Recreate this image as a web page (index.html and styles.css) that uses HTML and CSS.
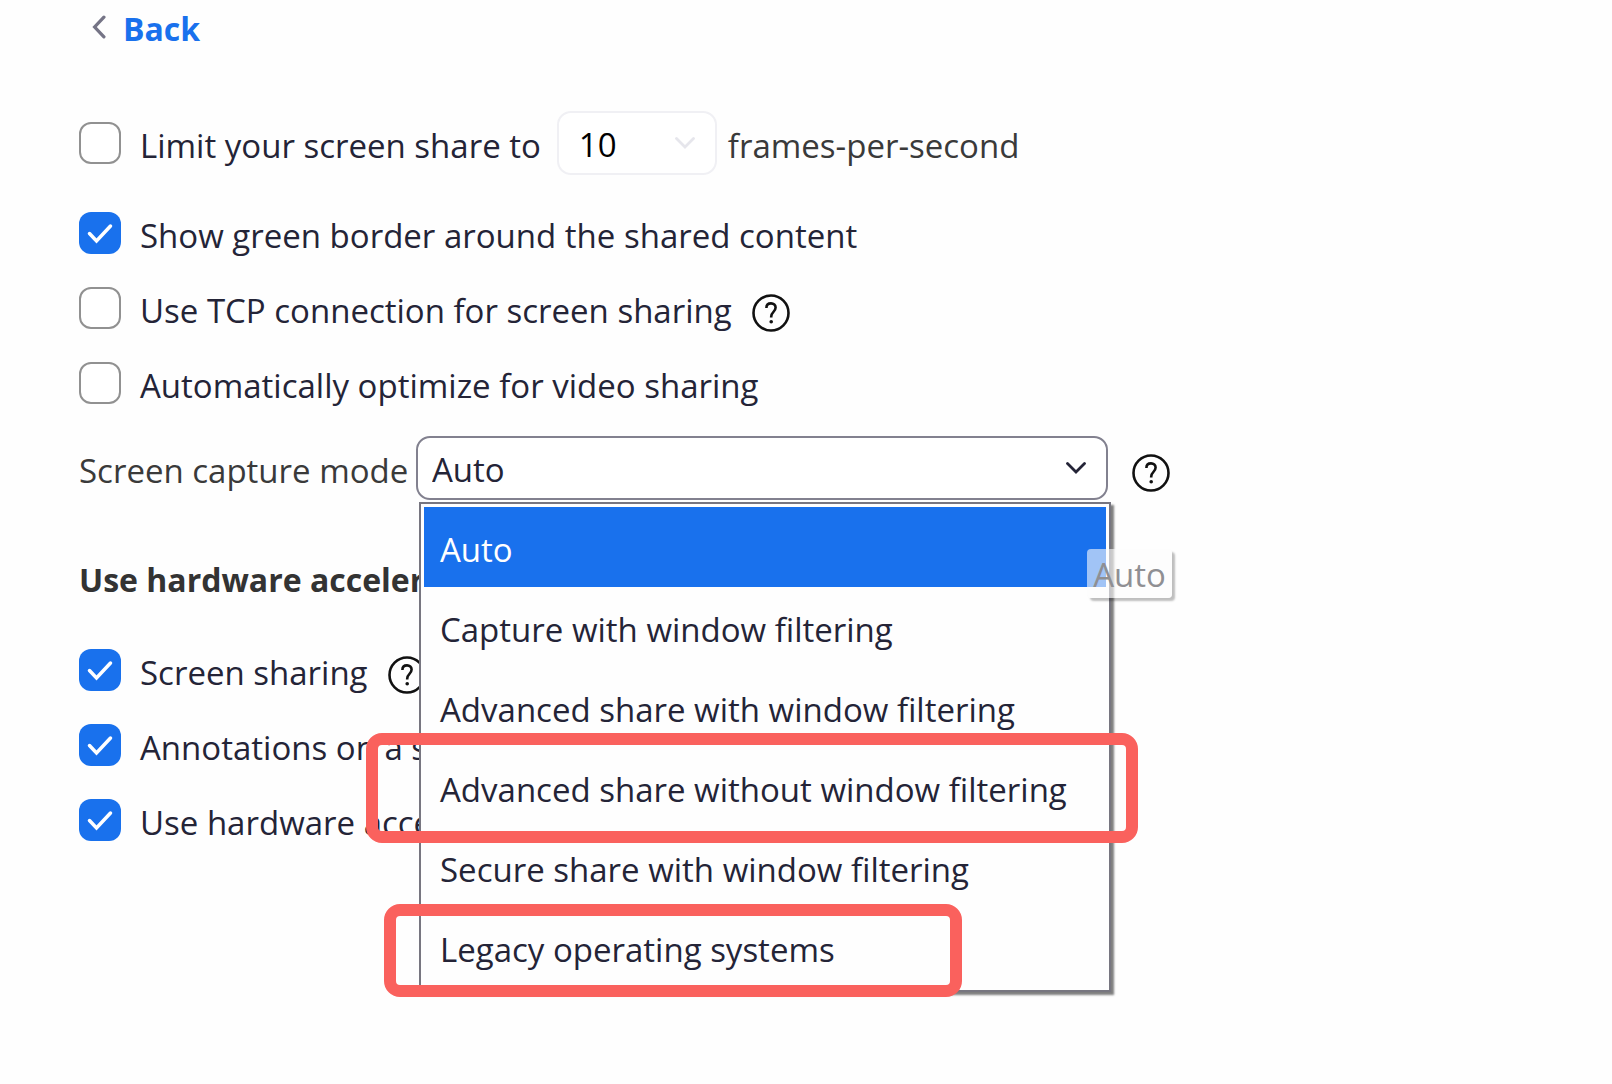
FILE: index.html
```html
<!DOCTYPE html>
<html lang="en">
<head>
    <meta charset="UTF-8">
    <meta name="viewport" content="width=device-width, initial-scale=1.0">
    <title>Screen Share Settings</title>
    <link rel="stylesheet" href="styles.css">
</head>
<body>
    <!-- shared icons -->
    <svg class="sprite" aria-hidden="true">
        <symbol id="icon-help" viewBox="0 0 38 38">
            <circle cx="19" cy="19" r="17.5" fill="none" stroke="currentColor" stroke-width="2.6"/>
            <path d="M14.4 14c0-2.900 1.900-4.600 4.600-4.600s4.600 1.700 4.600 4.200c0 2-.9 3.200-2.300 4.500-1.500 1.400-2.100 2.400-2.100 4.700v.8" fill="none" stroke="currentColor" stroke-width="2.600"/>
            <circle cx="19.200" cy="27.800" r="1.800" fill="currentColor"/>
        </symbol>
        <symbol id="icon-down" viewBox="0 0 20 12">
            <path d="M1.500 1.500L10 10l8.500-8.500" fill="none" stroke="currentColor" stroke-width="2.800" stroke-linecap="round"/>
        </symbol>
    </svg>

    <main class="settings">
        <a href="#" class="back">
            <svg class="back-icon" viewBox="0 0 14 22" aria-hidden="true">
                <path d="M11.500 2L3 11l8.500 9" fill="none" stroke="currentColor" stroke-width="3" stroke-linecap="round"/>
            </svg>
            Back
        </a>

        <div class="row row-limit">
            <input type="checkbox" id="limit">
            <label for="limit">Limit your screen share to</label>
            <div class="select select-fps">
                <select aria-label="Frames per second" disabled>
                    <option>10</option>
                </select>
                <svg class="arrow" aria-hidden="true"><use href="#icon-down"/></svg>
            </div>
            <span class="plain">frames-per-second</span>
        </div>

        <div class="group">
            <div class="row">
                <input type="checkbox" id="border" checked>
                <label for="border">Show green border around the shared content</label>
            </div>
            <div class="row">
                <input type="checkbox" id="tcp">
                <label for="tcp">Use TCP connection for screen sharing</label>
                <button type="button" class="help" aria-label="Help"><svg><use href="#icon-help"/></svg></button>
            </div>
            <div class="row">
                <input type="checkbox" id="optimize">
                <label for="optimize">Automatically optimize for video sharing</label>
            </div>
        </div>

        <div class="field">
            <label for="mode" class="plain">Screen capture mode</label>
            <div class="select select-mode">
                <select id="mode">
                    <option>Auto</option>
                </select>
                <svg class="arrow" aria-hidden="true"><use href="#icon-down"/></svg>

                <ul class="menu" role="listbox" aria-label="Screen capture mode">
                    <li role="option" class="active" aria-selected="true">Auto<span class="tooltip">Auto</span></li>
                    <li role="option">Capture with window filtering</li>
                    <li role="option">Advanced share with window filtering</li>
                    <li role="option" class="marked">Advanced share without window filtering</li>
                    <li role="option">Secure share with window filtering</li>
                    <li role="option" class="marked marked-short">Legacy operating systems</li>
                </ul>
            </div>
            <button type="button" class="help" aria-label="Help"><svg><use href="#icon-help"/></svg></button>
        </div>

        <h2>Use hardware acceler</h2>

        <div class="group">
            <div class="row">
                <input type="checkbox" id="sharing" checked>
                <label for="sharing">Screen sharing</label>
                <button type="button" class="help" aria-label="Help"><svg><use href="#icon-help"/></svg></button>
            </div>
            <div class="row">
                <input type="checkbox" id="annotations" checked>
                <label for="annotations">Annotations on a s</label>
            </div>
            <div class="row">
                <input type="checkbox" id="hardware" checked>
                <label for="hardware">Use hardware acce</label>
            </div>
        </div>
    </main>
</body>
</html>
```

FILE: styles.css
```css
:root {
    --blue: #1971ed;
    --text: #242437;
    --plain: #3a3a3a;
    --red: #fa615d;
    --border: #82818f;
}

* {
    box-sizing: border-box;
}

body {
    margin: 0;
    background-color: #fefefe;
    color: var(--text);
    font-family: "Segoe UI", "Open Sans", "Noto Sans", sans-serif;
    font-size: 33px;
    line-height: 42px;
}

.sprite {
    position: absolute;
    width: 0;
    height: 0;
}

.settings {
    max-width: 1240px;
    min-height: 100vh;
    padding: 8px 40px 40px 79px;
}

.back {
    display: flex;
    align-items: center;
    gap: 16px;
    padding-left: 12px;
    color: var(--blue);
    font-size: 32px;
    font-weight: bold;
    text-decoration: none;
}

.back-icon {
    width: 16px;
    height: 24px;
    margin-bottom: 4px;
    color: #757486;
}

.row {
    display: flex;
    align-items: center;
    height: 42px;
    white-space: nowrap;
}

/* text sits a little lower than the box beside it */
.row label,
.plain {
    padding-top: 6px;
}

.row-limit {
    height: 64px;
    margin: 61px 0 37px;
}

.group {
    display: flex;
    flex-direction: column;
    gap: 33px;
}

input[type="checkbox"] {
    appearance: none;
    flex: none;
    width: 42px;
    height: 42px;
    margin: 0 19px 0 0;
    border: 2px solid #919191;
    border-radius: 12px;
    background-color: #fff;
}

input[type="checkbox"]:checked {
    border: none;
    background: var(--blue) url("data:image/svg+xml,%3Csvg xmlns='http://www.w3.org/2000/svg' viewBox='0 0 42 42'%3E%3Cpath d='M10.500 21.500l7 7.500 14-15' fill='none' stroke='%23fff' stroke-width='3.500' stroke-linecap='round'/%3E%3C/svg%3E");
}

.plain {
    color: var(--plain);
}

.select {
    position: relative;
    height: 64px;
}

.select select {
    appearance: none;
    width: 100%;
    height: 100%;
    padding: 4px 60px 0 14px;
    border: 2px solid var(--border);
    border-radius: 14px;
    background-color: #fff;
    color: var(--text);
    font: inherit;
}

.arrow {
    position: absolute;
    top: 26px;
    right: 22px;
    width: 20px;
    height: 12px;
    pointer-events: none;
}

.select-fps {
    width: 160px;
    margin: 0 11px 0 16px;
}

.select-fps select {
    padding-left: 20px;
    border-color: #f0f0f4;
    color: #000;
    opacity: 1;
}

.select-fps .arrow {
    color: #e6e6ec;
}

.help {
    flex: none;
    width: 38px;
    height: 38px;
    margin: 10px 0 0 20px;
    padding: 0;
    border: none;
    background: none;
    color: #111;
}

.help svg {
    display: block;
    width: 38px;
    height: 38px;
}

.field {
    display: flex;
    align-items: center;
    margin-top: 32px;
}

.field > label {
    flex: none;
    width: 337px;
}

.field > .help {
    margin-left: 24px;
}

.select-mode {
    flex: 1;
    max-width: 692px;
}

.menu {
    position: absolute;
    top: 66px;
    left: 3px;
    right: -3px;
    z-index: 1;
    margin: 0;
    padding: 3px;
    border: 2px solid #777680;
    background-color: #fefefe;
    box-shadow: 3px 3px 2px rgba(0, 0, 0, 0.5);
    list-style: none;
}

.menu li {
    position: relative;
    height: 80px;
    padding: 3px 16px 0;
    line-height: 80px;
    white-space: nowrap;
}

.menu .active {
    background-color: var(--blue);
    color: #fff;
}

.tooltip {
    position: absolute;
    top: 42px;
    right: -66px;
    width: 85px;
    height: 49px;
    border-radius: 4px;
    background-color: rgba(252, 252, 252, 0.6);
    box-shadow: 3px 3px 2px rgba(0, 0, 0, 0.25);
    color: #8f8f93;
    line-height: 52px;
    text-align: center;
}

/* red callouts round the recommended options */
.marked::after {
    content: "";
    position: absolute;
    top: -14px;
    right: -32px;
    bottom: -16px;
    left: -58px;
    border: 12px solid var(--red);
    border-radius: 16px;
}

.marked-short::after {
    top: -3px;
    right: 144px;
    bottom: -10px;
    left: -40px;
}

h2 {
    margin: 59px 0 48px;
    color: #333;
    font-size: 32px;
    line-height: 42px;
}
```
